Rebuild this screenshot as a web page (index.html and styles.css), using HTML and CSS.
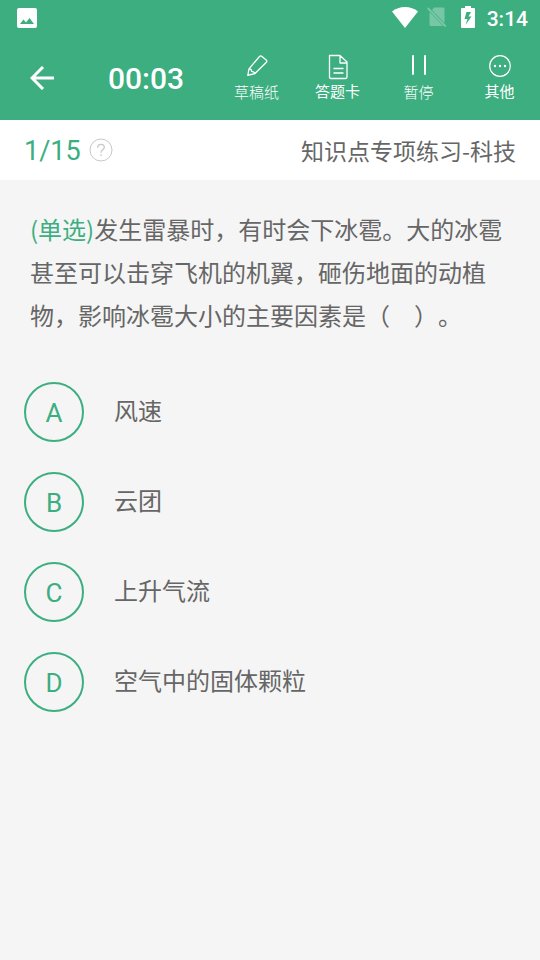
FILE: index.html
```html
<!DOCTYPE html>
<html lang="zh-CN">
<head>
<meta charset="utf-8">
<meta name="viewport" content="width=device-width, initial-scale=1">
<title>知识点专项练习-科技</title>
<link rel="stylesheet" href="styles.css">
</head>
<body>
<header class="top">
  <div class="status">
    <svg class="status-photo" width="20" height="20" viewBox="0 0 20 20" aria-hidden="true"><path fill="#fff" fill-rule="evenodd" d="M2 0h16a2 2 0 0 1 2 2v16a2 2 0 0 1-2 2H2a2 2 0 0 1-2-2V2a2 2 0 0 1 2-2zM3 16h14l-4.500-6-3.500 4.500-2.500-3z"/></svg>
    <div class="status-right">
      <svg width="26" height="21" viewBox="0 0 26 21" aria-hidden="true"><path fill="#fff" d="M13 21 0 4.500C3.500 1.600 8 0 13 0s9.500 1.600 13 4.500z"/></svg>
      <svg class="status-sim" width="20" height="22" viewBox="0 0 20 22" aria-hidden="true"><g opacity=".3"><path fill="#fff" d="M7 1.500h9q1.500 0 1.500 1.500V17L5 4zM3 6.500 16 20H4q-1.500 0-1.500-1.500V6z"/><path stroke="#fff" stroke-width="2" d="m.7 2 18 18.500"/></g></svg>
      <svg class="status-battery" width="14" height="22" viewBox="0 0 14 22" aria-hidden="true"><path fill="#fff" fill-rule="evenodd" d="M4 0h6v2h3q1 0 1 1v18q0 1-1 1H1q-1 0-1-1V3q0-1 1-1h3zM5.500 6 3.500 13h3L4.500 19l6-8.500H7.500L10 6z"/></svg>
      <span class="clock">3:14</span>
    </div>
  </div>
  <div class="bar">
    <div class="bar-left">
      <button class="back" type="button" aria-label="返回"><svg width="24" height="24" viewBox="0 0 24 24" fill="none" stroke="#fff" stroke-width="3" aria-hidden="true"><path d="M24 12H2.500M13 1 2 12l11 11"/></svg></button>
      <span class="timer">00:03</span>
    </div>
    <nav class="actions">
      <button class="action" type="button">
        <svg width="24" height="26" viewBox="0 0 24 26" fill="none" stroke="#fff" stroke-width="1.300" stroke-linejoin="round" aria-hidden="true"><path d="M2.800 21.300 4 14.800 14.500 2.500q1-1.200 2.200-.2l4.500 3.700q1.200 1 .2 2.200L10 19.500zM4 14.800q2.700.2 2.500 2.500 2.700 0 3.500 2.200"/></svg>
        <span class="thin">草稿纸</span>
      </button>
      <button class="action" type="button">
        <svg width="24" height="26" viewBox="0 0 24 26" fill="none" stroke="#fff" stroke-width="1.300" stroke-linejoin="round" aria-hidden="true"><path d="M3.500 1.500H14l7 6.500v15q0 1.500-1.500 1.500H5Q3.500 24.500 3.500 23zM14 1.500V9h7M7.500 14.500h10M7.500 19h10"/></svg>
        <span>答题卡</span>
      </button>
      <button class="action" type="button">
        <svg width="24" height="26" viewBox="0 0 24 26" fill="none" stroke="#fff" stroke-width="2" stroke-linecap="round" aria-hidden="true"><path d="M6 2v18M18 2v18"/></svg>
        <span class="thin">暂停</span>
      </button>
      <button class="action" type="button">
        <svg width="24" height="26" viewBox="0 0 24 26" aria-hidden="true"><circle cx="12" cy="12" r="10.300" fill="none" stroke="#fff" stroke-width="1.200"/><g fill="#fff"><circle cx="7" cy="12" r="1.200"/><circle cx="12" cy="12" r="1.200"/><circle cx="17" cy="12" r="1.200"/></g></svg>
        <span>其他</span>
      </button>
    </nav>
  </div>
</header>
<div class="progress">
  <span class="count">1/15</span>
  <button class="help" type="button" aria-label="帮助"><svg width="24" height="24" viewBox="0 0 24 24" fill="none" stroke="#c8c8c8" aria-hidden="true"><circle cx="12" cy="12" r="11"/><path stroke-width="1.300" d="M8.700 9.700C8.700 5.300 15.300 5.300 15.300 9.200c0 2.500-3.300 2.600-3.300 5.600M12 16.300V18"/></svg></button>
  <h1 class="title">知识点专项练习-科技</h1>
</div>
<main>
  <p class="question"><span class="kind">(单选)</span>发生雷暴时，有时会下冰雹。大的冰雹甚至可以击穿飞机的机翼，砸伤地面的动植物，影响冰雹大小的主要因素是（　）。</p>
  <div class="options">
    <button class="option" type="button"><span class="letter">A</span><span class="answer">风速</span></button>
    <button class="option" type="button"><span class="letter">B</span><span class="answer">云团</span></button>
    <button class="option" type="button"><span class="letter">C</span><span class="answer">上升气流</span></button>
    <button class="option" type="button"><span class="letter">D</span><span class="answer">空气中的固体颗粒</span></button>
  </div>
</main>
</body>
</html>
```
FILE: styles.css
```css
* {
  box-sizing: border-box;
}

body {
  margin: 0;
  background: #f5f5f5;
  color: #666;
  font-family: Roboto, "Noto Sans CJK SC", sans-serif;
}

button {
  padding: 0;
  border: 0;
  background: none;
  color: inherit;
  font: inherit;
  cursor: pointer;
}

svg {
  display: block;
}

.top {
  background: #3cae80;
  color: #fff;
}

.status {
  display: flex;
  align-items: center;
  justify-content: space-between;
  height: 36px;
  padding: 0 12px 0 17px;
}

.status-right {
  display: flex;
  align-items: center;
  height: 36px;
  padding-bottom: 2px;
}

.status-sim {
  margin-left: 9px;
}

.status-battery {
  margin: 0 12px 0 14px;
}

.clock {
  padding-top: 4px;
  font-size: 21px;
  font-weight: 500;
  line-height: 24px;
}

.bar {
  display: flex;
  height: 84px;
}

.bar-left {
  display: flex;
  align-items: center;
  width: 40%;
  padding-left: 30px;
}

.timer {
  margin-left: 54px;
  font-size: 30px;
  font-weight: 500;
}

.actions {
  display: flex;
  width: 60%;
}

.action {
  display: flex;
  flex: 1;
  flex-direction: column;
  align-items: center;
  padding-top: 18px;
  font-size: 15px;
  line-height: 24px;
}

.thin {
  padding-top: 1px;
  font-weight: 300;
}

.progress {
  display: flex;
  align-items: center;
  height: 60px;
  padding: 0 24px;
  background: #fff;
}

.count {
  padding-top: 2px;
  color: #3cae80;
  font-size: 27px;
}

.help {
  margin-left: 8px;
}

.title {
  margin: 0 0 0 auto;
  font-family: "Noto Sans CJK SC", sans-serif;
  font-size: 23px;
  font-weight: 400;
}

.question {
  margin: 0;
  padding: 27px 30px;
  font-family: "Noto Sans CJK SC", sans-serif;
  font-size: 24px;
  line-height: 43px;
  text-spacing-trim: space-all;
}

.kind {
  color: #3cae80;
}

.options {
  display: flex;
  flex-direction: column;
  gap: 30px;
  padding: 19px 24px;
}

.option {
  display: flex;
  align-items: center;
  gap: 30px;
  font-size: 24px;
  text-align: left;
}

.answer {
  padding-bottom: 5px;
}

.letter {
  flex: none;
  width: 60px;
  height: 60px;
  border: 2px solid #3cae80;
  border-radius: 50%;
  color: #3cae80;
  font-size: 26px;
  line-height: 58px;
  text-align: center;
}
```
